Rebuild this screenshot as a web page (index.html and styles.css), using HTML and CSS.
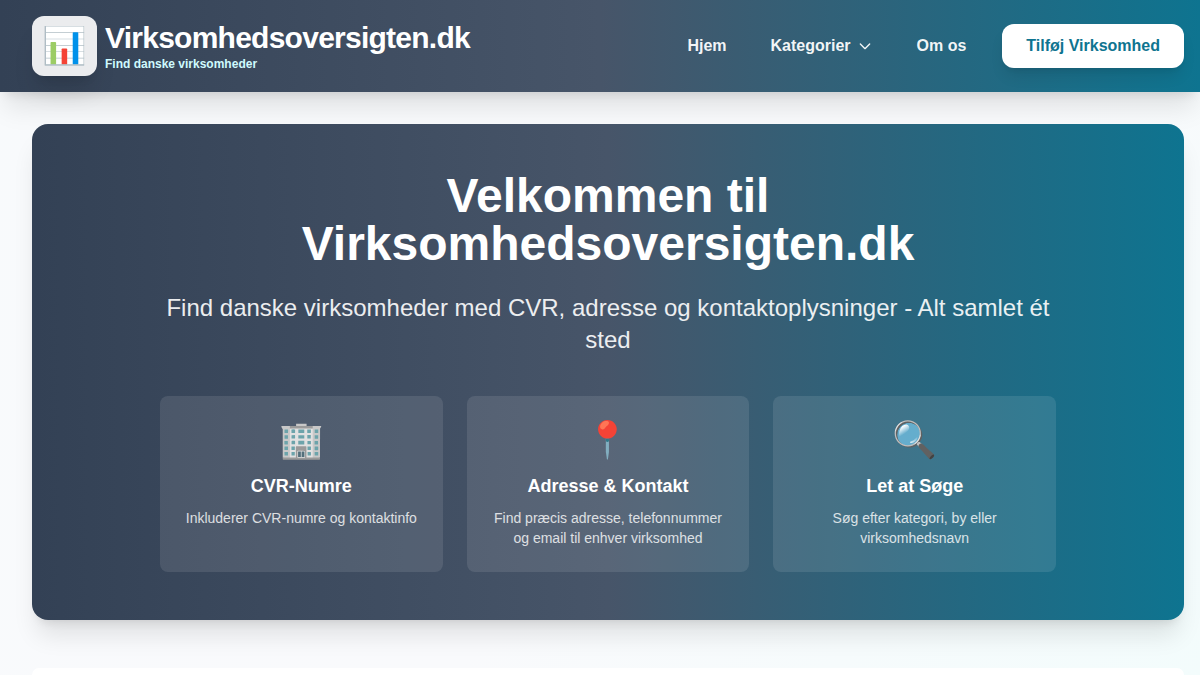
FILE: index.html
```html
<!DOCTYPE html>
<html lang="da">
<head>
<meta charset="utf-8">
<meta name="viewport" content="width=device-width, initial-scale=1">
<title>Virksomhedsoversigten.dk</title>
<link rel="stylesheet" href="styles.css">
</head>
<body>
<header class="header">
  <a class="brand" href="#">
    <span class="logo">📊</span>
    <span class="brand-text">
      <span class="brand-name">Virksomhedsoversigten.dk</span>
      <span class="tagline">Find danske virksomheder</span>
    </span>
  </a>
  <nav class="nav">
    <a class="nav-link" href="#">Hjem</a>
    <button class="nav-link" type="button">Kategorier
      <svg class="chevron" viewBox="0 0 24 24" fill="none" stroke="currentColor" stroke-width="2" stroke-linecap="round" stroke-linejoin="round"><path d="M19 9l-7 7-7-7"/></svg>
    </button>
    <a class="nav-link" href="#">Om os</a>
    <a class="cta" href="#">Tilføj Virksomhed</a>
  </nav>
</header>
<main class="main">
  <section class="hero">
    <div class="hero-inner">
      <h1 class="title">Velkommen til Virksomhedsoversigten.dk</h1>
      <p class="lead">Find danske virksomheder med CVR, adresse og kontaktoplysninger - Alt samlet ét sted</p>
      <div class="cards">
        <article class="card"><div class="card-icon">🏢</div><h2 class="card-title">CVR-Numre</h2><p class="card-text">Inkluderer CVR-numre og kontaktinfo</p></article>
        <article class="card"><div class="card-icon">📍</div><h2 class="card-title">Adresse &amp; Kontakt</h2><p class="card-text">Find præcis adresse, telefonnummer og email til enhver virksomhed</p></article>
        <article class="card"><div class="card-icon">🔍</div><h2 class="card-title">Let at Søge</h2><p class="card-text">Søg efter kategori, by eller virksomhedsnavn</p></article>
      </div>
    </div>
  </section>
  <section class="panel"></section>
</main>
</body>
</html>
```
FILE: styles.css
```css
* { box-sizing: border-box; margin: 0; }
body {
  min-height: 100vh;
  display: flex;
  flex-direction: column;
  font-family: "Liberation Sans", Arial, sans-serif;
  font-size: 16px;
  line-height: 24px;
  color: #fff;
  background: linear-gradient(135deg, #f8fafc, #f9fafc 60%, #f3fcfc);
}
a { color: inherit; text-decoration: none; }
.header {
  position: relative;
  display: flex;
  align-items: center;
  justify-content: space-between;
  padding: 16px 16px 16px 32px;
  background: linear-gradient(90deg, #334155, #475569 50%, #0e7490);
  box-shadow: 0 20px 25px -5px rgba(0,0,0,.1), 0 8px 10px -6px rgba(0,0,0,.1);
}
.brand { display: flex; align-items: center; gap: 8px; }
.logo {
  padding: 12px 10px;
  font-size: 36px;
  line-height: 36px;
  border-radius: 12px;
  background: rgba(255,255,255,.9);
  box-shadow: 0 20px 25px -5px rgba(0,0,0,.1), 0 8px 10px -6px rgba(0,0,0,.1);
}
.brand-text { display: flex; flex-direction: column; }
.brand-name { font-size: 30px; line-height: 36px; font-weight: 700; letter-spacing: -0.75px; }
.tagline { font-size: 12px; line-height: 16px; font-weight: 700; color: #cffafe; }
.nav { display: flex; align-items: center; gap: 4px; }
.nav-link {
  display: flex;
  align-items: center;
  gap: 6px;
  padding: 10px 20px;
  border: 0;
  background: none;
  font: inherit;
  font-weight: 700;
  color: rgba(255,255,255,.95);
}
.chevron { width: 16px; height: 16px; }
.cta {
  margin-left: 12px;
  padding: 10px 24px;
  border-radius: 12px;
  background: #fff;
  color: #0e7490;
  font-weight: 700;
  box-shadow: 0 10px 15px -3px rgba(0,0,0,.1), 0 4px 6px -4px rgba(0,0,0,.1);
}
.main {
  flex: 1;
  display: flex;
  flex-direction: column;
  gap: 48px;
  padding: 32px 16px 0 32px;
}
.hero {
  padding: 48px;
  border-radius: 16px;
  background: linear-gradient(90deg, #334155, #475569 50%, #0e7490);
  box-shadow: 0 20px 25px -5px rgba(0,0,0,.1), 0 8px 10px -6px rgba(0,0,0,.1);
}
.hero { position: relative; }
.hero-inner { max-width: 896px; margin: 0 auto; text-align: center; }
.title { font-size: 48px; line-height: 48px; font-weight: 700; }
.lead { margin-top: 24px; font-size: 24px; line-height: 32px; opacity: .9; }
.cards { display: grid; grid-template-columns: repeat(3, 1fr); gap: 24px; margin-top: 40px; }
.card { padding: 24px; border-radius: 8px; background: rgba(255,255,255,.1); }
.card-icon { font-size: 36px; line-height: 40px; margin-bottom: 12px; }
.card-title { font-size: 18px; line-height: 28px; font-weight: 700; }
.card-text { margin-top: 8px; font-size: 14px; line-height: 20px; opacity: .8; }
.panel {
  position: relative;
  flex: 1;
  border-radius: 12px 12px 0 0;
  background: #fff;
}
```
